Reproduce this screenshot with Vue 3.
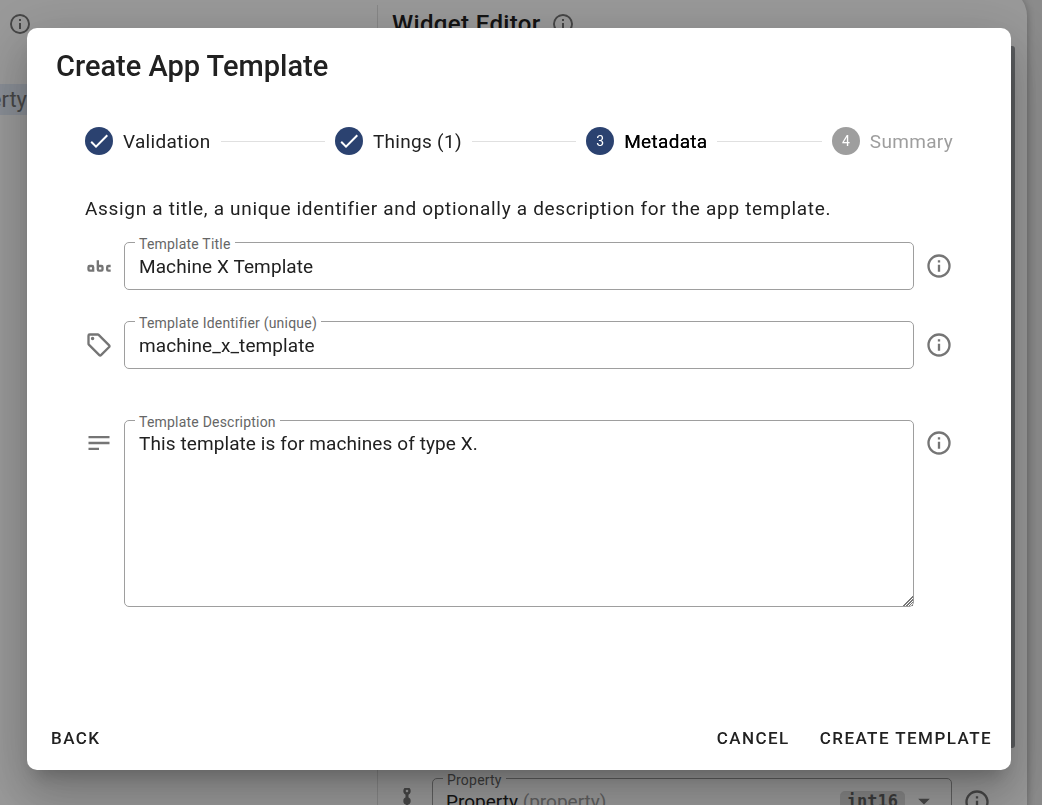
<template>
  <div class="page">
    <!-- Editor behind the dialog -->
    <main class="workspace" inert>
      <aside class="sidebar">
        <div class="sidebar-header">
          <svg class="icon-small" viewBox="0 0 24 24"><path :d="icons.info" /></svg>
        </div>
        <div class="selected-item">erty</div>
      </aside>

      <section class="editor">
        <header class="editor-header">
          <h2 class="editor-title">Widget Editor</h2>
          <svg class="icon-small" viewBox="0 0 24 24"><path :d="icons.info" /></svg>
        </header>
        <div class="editor-scroll">
          <div class="scroll-thumb"></div>
        </div>
        <div class="property-row">
          <svg class="icon" viewBox="0 0 28 28">
            <circle cx="14" cy="3" r="2.5" fill="none" stroke="currentColor" stroke-width="2.4" />
            <path d="M12.5 6h3v5h-3zM13 12h2v10h-2z" />
            <circle cx="14" cy="13" r="3.7" />
            <circle cx="14" cy="23" r="3" />
          </svg>
          <div class="field">
            <span id="property-label" class="field-label">Property</span>
            <button type="button" class="property-select" aria-labelledby="property-label">
              <span class="property-name">Property <span class="muted">(property)</span></span>
              <code class="type-chip">int16</code>
              <svg class="icon" viewBox="0 0 24 24"><path d="M7,10L12,15L17,10H7Z" /></svg>
            </button>
          </div>
          <svg class="icon" viewBox="0 0 24 24"><path :d="icons.info" /></svg>
        </div>
      </section>
    </main>

    <div class="overlay">
      <form class="dialog" role="dialog" aria-labelledby="dialog-title" @submit.prevent>
        <h1 id="dialog-title" class="dialog-title">Create App Template</h1>

        <div class="dialog-content">
          <ol class="stepper">
            <template v-for="(step, index) in steps" :key="step.label">
              <li v-if="index > 0" class="step-line" aria-hidden="true"></li>
              <li class="step" :class="step.state">
                <span class="step-badge">
                  <svg v-if="step.state === 'done'" class="step-check" viewBox="0 0 24 24">
                    <path :d="icons.check" />
                  </svg>
                  <template v-else>{{ index + 1 }}</template>
                </span>
                <span class="step-label">{{ step.label }}</span>
              </li>
            </template>
          </ol>

          <p class="intro">
            Assign a title, a unique identifier and optionally a description for the app template.
          </p>

          <div v-for="field in fields" :key="field.id" class="form-row">
            <svg class="icon" viewBox="0 0 24 24"><path :d="icons[field.icon]" /></svg>
            <div class="field">
              <textarea
                v-if="field.multiline"
                :id="field.id"
                v-model="form[field.id]"
                class="field-input field-textarea"
                spellcheck="false"
              ></textarea>
              <input
                v-else
                :id="field.id"
                v-model="form[field.id]"
                class="field-input"
                type="text"
                spellcheck="false"
              />
              <label class="field-label" :for="field.id">{{ field.label }}</label>
            </div>
            <svg class="icon" viewBox="0 0 24 24"><path :d="icons.info" /></svg>
          </div>
        </div>

        <footer class="dialog-actions">
          <button type="button" class="btn">Back</button>
          <span class="spacer"></span>
          <button type="button" class="btn">Cancel</button>
          <button type="submit" class="btn">Create Template</button>
        </footer>
      </form>
    </div>
  </div>
</template>

<script setup>
import { reactive } from 'vue'

const icons = {
  info: 'M11,9H13V7H11M12,20C7.59,20 4,16.41 4,12C4,7.59 7.59,4 12,4C16.41,4 20,7.59 20,12C20,16.41 16.41,20 12,20M12,2A10,10 0 0,0 2,12A10,10 0 0,0 12,22A10,10 0 0,0 22,12A10,10 0 0,0 12,2M11,17H13V11H11V17Z',
  check: 'M21,7L9,19L3.5,13.5L4.91,12.09L9,16.17L19.59,5.59L21,7Z',
  abc: 'M6,11A2,2 0 0,1 8,13V17H4A2,2 0 0,1 2,15V13A2,2 0 0,1 4,11H6M4,13V15H6V13H4M20,13V15H22V17H20A2,2 0 0,1 18,15V13A2,2 0 0,1 20,11H22V13H20M12,7V11H14A2,2 0 0,1 16,13V15A2,2 0 0,1 14,17H12A2,2 0 0,1 10,15V7H12M12,15H14V13H12V15Z',
  tag: 'M21.41,11.58L12.41,2.58A2,2 0 0,0 11,2H4A2,2 0 0,0 2,4V11A2,2 0 0,0 2.59,12.42L11.59,21.42A2,2 0 0,0 13,22A2,2 0 0,0 14.41,21.41L21.41,14.41A2,2 0 0,0 22,13A2,2 0 0,0 21.41,11.58M13,20L4,11V4H11L20,13M6.5,5A1.5,1.5 0 1,1 5,6.5A1.5,1.5 0 0,1 6.5,5Z',
  text: 'M21,6V8H3V6H21M3,18H12V16H3V18M3,13H21V11H3V13Z'
}

const steps = [
  { label: 'Validation', state: 'done' },
  { label: 'Things (1)', state: 'done' },
  { label: 'Metadata', state: 'active' },
  { label: 'Summary', state: 'pending' }
]

const fields = [
  { id: 'title', label: 'Template Title', icon: 'abc' },
  { id: 'identifier', label: 'Template Identifier (unique)', icon: 'tag' },
  { id: 'description', label: 'Template Description', icon: 'text', multiline: true }
]

const form = reactive({
  title: 'Machine X Template',
  identifier: 'machine_x_template',
  description: 'This template is for machines of type X.'
})
</script>

<style>
body {
  margin: 0;
}
</style>

<style scoped>
* {
  box-sizing: border-box;
}

.page {
  height: 100vh;
  overflow: hidden;
  background: #e8e8e8;
  color: #212121;
  font-family: Roboto, sans-serif;
  font-size: 19px;
}

.icon,
.icon-small {
  flex: none;
  width: 28px;
  height: 28px;
  fill: currentColor;
  color: #757575;
}

.icon-small {
  width: 24px;
  height: 24px;
}

/* Editor */
.workspace {
  display: flex;
  height: calc(100vh + 40px);
  margin: -12px 15px 0 0;
  padding-top: 17px;
  background: #fff;
  border-radius: 0 28px 28px 0;
  box-shadow: 0 2px 8px rgba(0, 0, 0, 0.3);
}

.sidebar {
  width: 378px;
  flex: none;
  border-right: 1px solid #e0e0e0;
}

.sidebar-header {
  height: 79px;
  padding: 7px 8px;
}

.selected-item {
  display: flex;
  justify-content: flex-end;
  align-items: center;
  width: 27px;
  height: 31px;
  overflow: hidden;
  background: #e3ebf8;
  color: #757575;
  font-size: 22px;
}

.editor {
  flex: 1;
  min-width: 0;
  display: flex;
  flex-direction: column;
}

.editor-header {
  display: flex;
  align-items: center;
  gap: 10px;
  height: 41px;
  padding: 0 14px 3px;
}

.editor-title {
  margin: 0;
  font-size: 24px;
  font-weight: 500;
  letter-spacing: 0.015em;
}

.editor-scroll {
  display: flex;
  justify-content: flex-end;
  flex: none;
  height: calc(100vh - 103px);
  padding-right: 12px;
}

.scroll-thumb {
  width: 10px;
  background: #999ca0;
  border-radius: 3px;
}

.property-row {
  display: flex;
  align-items: center;
  gap: 11px;
  padding: 30px 36px 0 15px;
}

.property-select {
  display: flex;
  align-items: center;
  width: 100%;
  height: 48px;
  padding: 0 13px 2px;
  border: 1px solid #9e9e9e;
  border-radius: 5px;
  background: transparent;
  color: #212121;
  font: inherit;
  text-align: left;
}

.property-name {
  flex: 1;
}

.muted {
  color: #9e9e9e;
}

.type-chip {
  margin-right: 5px;
  padding: 0 7px;
  border-radius: 5px;
  background: #dcdcdc;
  color: #616161;
  font-family: "DejaVu Sans Mono", monospace;
  font-size: 17px;
  font-weight: 700;
}

/* Dialog */
.overlay {
  position: fixed;
  inset: 0;
  display: flex;
  padding: 28px 31px 35px 27px;
  background: rgba(0, 0, 0, 0.4);
}

.dialog {
  flex: 1;
  min-width: 0;
  display: flex;
  flex-direction: column;
  background: #fff;
  border-radius: 10px;
  box-shadow:
    0 13px 18px -8px rgba(0, 0, 0, 0.2),
    0 29px 46px 4px rgba(0, 0, 0, 0.14),
    0 11px 55px 10px rgba(0, 0, 0, 0.12);
}

.dialog-title {
  margin: 0;
  padding: 19px 29px 0;
  font-size: 29px;
  font-weight: 500;
  line-height: 38px;
}

.dialog-content {
  flex: 1;
  padding: 42px 58px 0;
}

.stepper {
  display: flex;
  align-items: center;
  gap: 10px;
  margin: 0;
  padding: 0;
  list-style: none;
}

.step {
  display: flex;
  align-items: center;
  gap: 10px;
  line-height: 28px;
  letter-spacing: 0.016em;
}

.step-label {
  line-height: 26px;
  padding-top: 2px;
}

.step-line {
  flex: 1;
  height: 1px;
  background: #e0e0e0;
}

.step-badge {
  display: flex;
  align-items: center;
  justify-content: center;
  width: 28px;
  height: 28px;
  border-radius: 50%;
  background: #2b4270;
  color: #fff;
  font-size: 14px;
  letter-spacing: normal;
}

.step-check {
  width: 24px;
  height: 24px;
  fill: currentColor;
}

.active .step-label {
  color: #000;
  text-shadow: 0 0 0 #000;
}

.pending {
  color: #9e9e9e;
}

.pending .step-badge {
  background: #9e9e9e;
}

.intro {
  margin: 40px 0 19px;
  line-height: 28px;
  letter-spacing: 0.036em;
}

.form-row {
  display: flex;
  gap: 11px;
  margin-bottom: 31px;
}

.form-row:last-child {
  margin: 51px 0 0;
}

.form-row > .icon {
  margin-top: 10px;
}

.form-row:last-child > .icon {
  margin-top: 9px;
}

.field {
  position: relative;
  flex: 1;
  min-width: 0;
}

.field-label {
  position: absolute;
  top: -8px;
  left: 11px;
  padding: 0 4px;
  background: #fff;
  color: #666;
  font-size: 14px;
  line-height: 20px;
  letter-spacing: 0.015em;
}

.field-input {
  display: block;
  width: 100%;
  height: 48px;
  padding: 0 14px;
  border: 1px solid #9e9e9e;
  border-radius: 5px;
  outline: none;
  background: transparent;
  color: #212121;
  font: inherit;
  letter-spacing: 0.005em;
}

.field-textarea {
  height: 187px;
  padding: 9px 14px;
  line-height: 28px;
  resize: vertical;
}

.field-textarea::-webkit-resizer {
  background:
    linear-gradient(135deg, #fff 66%, transparent 66%),
    repeating-linear-gradient(135deg, #777 0 1px, transparent 1px 2px);
}

.dialog-actions {
  display: flex;
  align-items: center;
  gap: 10px;
  padding: 0 9px 11px 14px;
}

.spacer {
  flex: 1;
}

.btn {
  height: 43px;
  padding: 0 10px;
  border: 0;
  border-radius: 5px;
  background: transparent;
  color: #212121;
  font: inherit;
  font-size: 17px;
  font-weight: 500;
  letter-spacing: 0.085em;
  text-transform: uppercase;
  cursor: pointer;
}
</style>
